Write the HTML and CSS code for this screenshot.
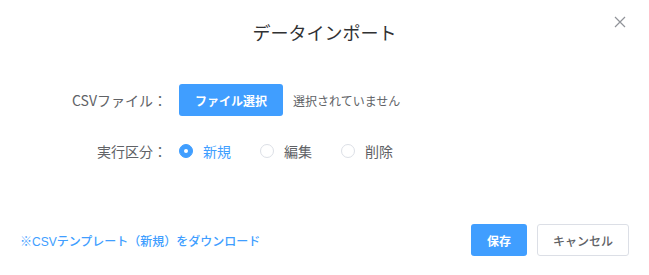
FILE: index.html
```html
<!DOCTYPE html>
<html lang="ja">
<head>
<meta charset="utf-8">
<title>データインポート</title>
<link rel="stylesheet" href="styles.css">
</head>
<body>
<div class="dialog">
  <div class="header">
    <span class="title">データインポート</span>
    <button class="close" aria-label="close">
      <svg width="12" height="12" viewBox="0 0 12 12"><path d="M1 1L11 11M11 1L1 11" stroke="#909399" stroke-width="1.2" fill="none"/></svg>
    </button>
  </div>
  <div class="body">
    <div class="row">
      <div class="label">CSVファイル：</div>
      <div class="content">
        <span class="btn btn-primary">ファイル選択</span>
        <span class="nofile">選択されていません</span>
      </div>
    </div>
    <div class="row">
      <div class="label">実行区分：</div>
      <div class="content radios">
        <label class="radio checked"><span class="circle"></span><span class="rlabel">新規</span></label>
        <label class="radio"><span class="circle"></span><span class="rlabel">編集</span></label>
        <label class="radio"><span class="circle"></span><span class="rlabel">削除</span></label>
      </div>
    </div>
  </div>
  <div class="footer">
    <a class="link" href="#">※CSVテンプレート（新規）をダウンロード</a>
    <div class="actions">
      <span class="btn btn-primary btn-save">保存</span>
      <span class="btn btn-default btn-cancel">キャンセル</span>
    </div>
  </div>
</div>
</body>
</html>
```
FILE: styles.css
```css
html, body {
  margin: 0;
  padding: 0;
  background: #fff;
}
body {
  font-family: "Noto Sans CJK JP", "Noto Sans", sans-serif;
  width: 649px;
  height: 275px;
  overflow: hidden;
}
.dialog {
  display: flex;
  flex-direction: column;
}
.header {
  position: relative;
  padding: 20px 20px 0;
  height: 24px;
  display: flex;
  justify-content: center;
}
.title {
  font-size: 18px;
  line-height: 24px;
  color: #303133;
}
.close {
  position: absolute;
  top: 16px;
  right: 23px;
  border: 0;
  background: none;
  padding: 0;
  width: 12px;
  height: 12px;
  display: flex;
}
.body {
  margin-top: 40px;
  display: flex;
  flex-direction: column;
  gap: 19px;
}
.row {
  display: flex;
  align-items: center;
  height: 32px;
}
.label {
  width: 167px;
  padding-right: 12px;
  text-align: right;
  font-size: 14px;
  color: #606266;
  box-sizing: content-box;
}
.content {
  display: flex;
  align-items: center;
}
.btn {
  display: inline-flex;
  align-items: center;
  justify-content: center;
  height: 32px;
  padding: 0 16px;
  box-sizing: border-box;
  border-radius: 3px;
  font-size: 12px;
  font-family: "Noto Sans CJK JP", sans-serif;
  white-space: nowrap;
}
.btn-primary {
  background: #409eff;
  color: #fff;
  font-weight: 700;
}
.btn-default {
  background: #fff;
  color: #606266;
  border: 1px solid #dcdfe6;
  font-weight: 500;
}
.btn-save {
  width: 56px;
  padding: 0;
}
.btn-cancel {
  width: 92px;
  padding: 0;
}
.nofile {
  margin-left: 10px;
  font-size: 12px;
  color: #606266;
}
.radios {
  gap: 29px;
}
.radio {
  display: flex;
  align-items: center;
  font-size: 14px;
  color: #606266;
}
.circle {
  width: 14px;
  height: 14px;
  box-sizing: border-box;
  border: 1px solid #dcdfe6;
  border-radius: 50%;
  background: #fff;
  display: flex;
  align-items: center;
  justify-content: center;
}
.radio.checked .circle {
  background: #409eff;
  border-color: #409eff;
}
.radio.checked .circle::after {
  content: "";
  width: 4px;
  height: 4px;
  border-radius: 50%;
  background: #fff;
}
.radio.checked .rlabel {
  color: #409eff;
}
.rlabel {
  margin-left: 10px;
}
.footer {
  margin-top: 57px;
  padding: 0 20px;
  display: flex;
  justify-content: space-between;
  align-items: center;
}
.link {
  font-family: "Liberation Sans", "Noto Sans CJK JP", sans-serif;
  font-size: 12px;
  color: #409eff;
  text-decoration: none;
  font-weight: 500;
}
.actions {
  display: flex;
  gap: 10px;
}
```
